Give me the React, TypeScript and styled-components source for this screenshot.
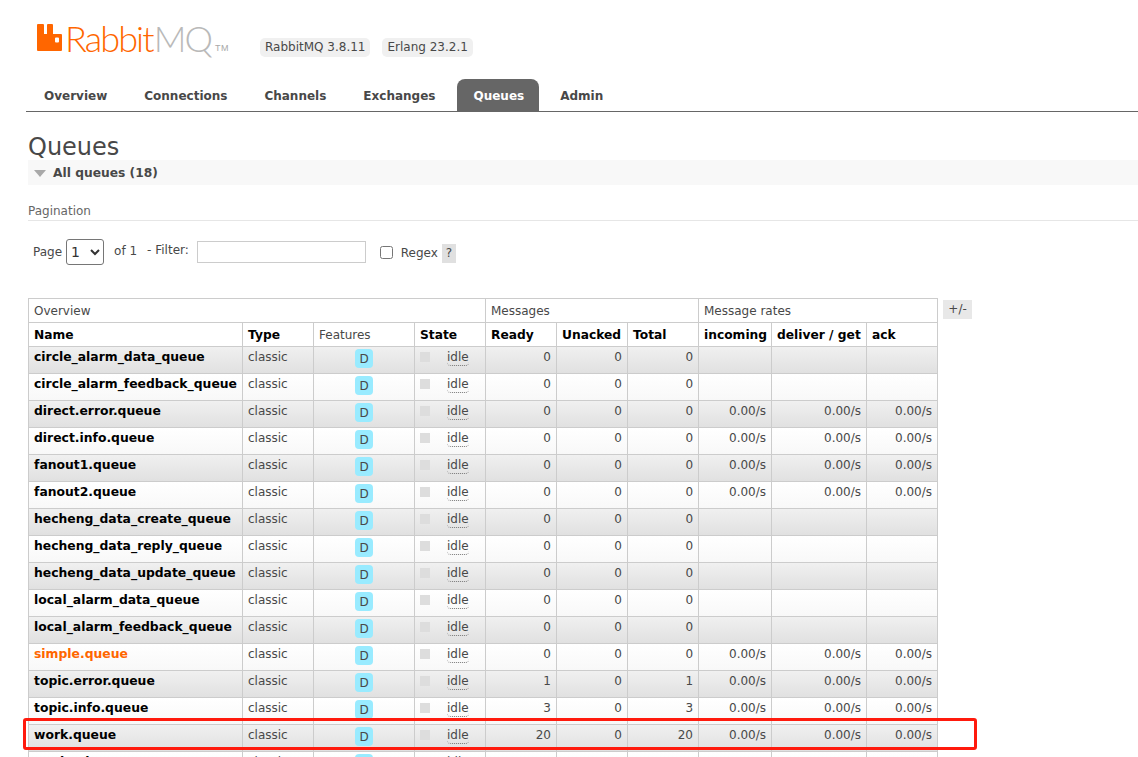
import React from 'react';
import styled, { createGlobalStyle } from 'styled-components';

const Global = createGlobalStyle`
  html, body { margin: 0; padding: 0; background: #fff; }
  body { font-family: "DejaVu Sans", Verdana, sans-serif; font-size: 12px; color: #484848; }
  #root { height: 757px; overflow: hidden; position: relative; }
`;

const Page = styled.div`
  position: relative;
  width: 1138px;
  height: 757px;
  overflow: hidden;
`;

const Header = styled.header`
  display: flex;
  align-items: flex-start;
  height: 79px;
  padding-left: 37px;
  box-sizing: border-box;
`;

const Logo = styled.div`
  display: flex;
  align-items: flex-start;
  width: 223px;
  height: 79px;
  padding-top: 16px;
  box-sizing: border-box;
`;

const LogoWord = styled.span<{ $grey?: boolean }>`
  font-family: "Lato", sans-serif;
  font-weight: 300;
  font-size: 36px;
  line-height: 44px;
  letter-spacing: -1.9px;
  margin-left: ${p => (p.$grey ? '1px' : '3px')};
  color: ${p => (p.$grey ? '#b9b9b9' : '#ff6600')};
`;

const LogoTm = styled.span`
  font-family: "Liberation Sans", sans-serif;
  font-size: 9px;
  letter-spacing: 0.5px;
  color: #a8a8a8;
  margin: 27px 0 0 4px;
`;

const Versions = styled.div`
  display: flex;
  gap: 12px;
  margin-top: 38px;
`;

const Version = styled.span`
  background: #f0f0f0;
  border-radius: 5px;
  padding: 0 5px;
  height: 19px;
  line-height: 19px;
  font-size: 12px;
  color: #484848;
`;

const Nav = styled.nav`
  display: flex;
  height: 32px;
  margin-left: 26px;
  border-bottom: 1px solid #666;
`;

const Tab = styled.a<{ $active?: boolean }>`
  display: block;
  height: 32px;
  line-height: 34px;
  margin: 0 ${p => (p.$active ? '3px' : '0')};
  padding: 0 ${p => (p.$active ? '15px' : '19px')} 0 ${p => (p.$active ? '16px' : '18px')};
  font-weight: 700;
  font-size: 12px;
  color: ${p => (p.$active ? '#fff' : '#484848')};
  background: ${p => (p.$active ? '#666' : 'transparent')};
  border-radius: ${p => (p.$active ? '8px 8px 0 0' : '0')};
`;

const Main = styled.main`
  padding-left: 28px;
`;

const Title = styled.h1`
  margin: 0;
  height: 48px;
  padding-top: 21px;
  box-sizing: border-box;
  font-size: 24px;
  line-height: 28px;
  font-weight: 400;
  color: #484848;
`;

const Section = styled.div`
  display: flex;
  align-items: center;
  height: 25px;
  background: #f8f8f8;
  font-weight: 700;
  font-size: 12.25px;
  color: #484848;
`;

const Arrow = styled.span`
  width: 0;
  height: 0;
  margin: 2px 7px 0 6px;
  border-left: 6px solid transparent;
  border-right: 6px solid transparent;
  border-top: 7px solid #a9a9a9;
`;

const SubHead = styled.div`
  height: 36px;
  padding-top: 18px;
  line-height: 16px;
  box-sizing: border-box;
  border-bottom: 1px solid #e6e6e6;
  font-size: 12px;
  color: #666;
`;

const Filter = styled.div`
  display: flex;
  align-items: center;
  height: 77px;
  padding: 0 0 15px 5px;
  box-sizing: border-box;
  color: #484848;
  font-size: 12px;
`;

const Label = styled.span<{ $gap?: number; $lift?: number }>`
  margin-left: ${p => p.$gap ?? 0}px;
  transform: translateY(${p => p.$lift ?? 0}px);
  white-space: pre;
`;

const PageSelect = styled.select`
  width: 38px;
  height: 26px;
  margin-left: 4px;
  font: 14px "DejaVu Sans", sans-serif;
  background: #fff;
  border: 1px solid #767676;
  border-radius: 3px;
  color: #333;
`;

const FilterInput = styled.input`
  width: 169px;
  height: 22px;
  margin-left: 8px;
  padding: 0;
  box-sizing: border-box;
  border: 1px solid #ccc;
`;

const RegexBox = styled.input`
  width: 13px;
  height: 13px;
  margin: 0 0 0 14px;
`;

const Help = styled.span`
  background: #e0e0e0;
  width: 14px;
  height: 19px;
  line-height: 19px;
  text-align: center;
  margin: 3px 0 0 4px;
`;

const TableWrap = styled.div`
  display: flex;
  align-items: flex-start;
`;

const Table = styled.table`
  border-collapse: collapse;
  table-layout: fixed;
  width: 910px;
  font-size: 12px;
  color: #484848;
`;

const HeadCell = styled.th<{ $strong?: boolean }>`
  height: 24px;
  padding: 0 5px;
  box-sizing: border-box;
  border: 1px solid #ccc;
  text-align: left;
  font-size: ${p => (p.$strong ? '12.25px' : '12px')};
  font-weight: ${p => (p.$strong ? 700 : 400)};
  color: ${p => (p.$strong ? '#000' : '#484848')};
  white-space: nowrap;
  overflow: hidden;
  background: #fff;
`;

const Row = styled.tr<{ $dark: boolean }>`
  height: 27px;
  background: ${p =>
    p.$dark
      ? 'linear-gradient(#f0f0f0, #e0e0e0)'
      : 'linear-gradient(#ffffff, #f8f8f8)'};
`;

const Cell = styled.td<{ $right?: boolean }>`
  height: 26px;
  padding: 0 5px 6px;
  box-sizing: border-box;
  border: 1px solid #ccc;
  text-align: ${p => (p.$right ? 'right' : 'left')};
  white-space: nowrap;
  overflow: hidden;
  vertical-align: middle;
`;

const NameCell = styled(Cell)<{ $orange?: boolean }>`
  font-weight: 700;
  font-size: 12.37px;
  padding-bottom: 7px;
  color: ${p => (p.$orange ? '#ff6600' : '#000')};
`;

const FeatureCell = styled.td`
  border: 1px solid #ccc;
  padding: 2px 0 0;
  text-align: center;
  vertical-align: top;
`;

const Durable = styled.span`
  display: inline-block;
  width: 18px;
  height: 19px;
  line-height: 20px;
  border-radius: 4px;
  background: #99ebff;
  color: #484848;
  text-align: center;
`;

const StateCell = styled.td`
  border: 1px solid #ccc;
  padding: 0 5px 5px;
  vertical-align: middle;
`;

const StateInner = styled.div`
  display: flex;
  align-items: center;
`;

const StateDot = styled.span`
  width: 10px;
  height: 10px;
  background: #ddd;
  margin-bottom: 1px;
`;

const Idle = styled.abbr`
  margin-left: 17px;
  text-decoration: none;
  border-bottom: 1px dotted #777;
  border-radius: 0 0 4px 4px;
  line-height: 14px;
  height: 15px;
`;

const PlusMinus = styled.span`
  margin-left: 5px;
  width: 29px;
  height: 19px;
  line-height: 19px;
  margin-top: 2px;
  background: #e8e8e8;
  text-align: center;
  color: #484848;
  font-size: 12px;
`;

const Highlight = styled.div`
  position: absolute;
  left: 23px;
  top: 718px;
  width: 948px;
  height: 26px;
  border: 3px solid #ff1a0d;
  border-radius: 3px;
  box-sizing: content-box;
  pointer-events: none;
`;

type Q = { name: string; ready: number; total: number; rates: boolean; orange?: boolean };

const queues: Q[] = [
  { name: 'circle_alarm_data_queue', ready: 0, total: 0, rates: false },
  { name: 'circle_alarm_feedback_queue', ready: 0, total: 0, rates: false },
  { name: 'direct.error.queue', ready: 0, total: 0, rates: true },
  { name: 'direct.info.queue', ready: 0, total: 0, rates: true },
  { name: 'fanout1.queue', ready: 0, total: 0, rates: true },
  { name: 'fanout2.queue', ready: 0, total: 0, rates: true },
  { name: 'hecheng_data_create_queue', ready: 0, total: 0, rates: false },
  { name: 'hecheng_data_reply_queue', ready: 0, total: 0, rates: false },
  { name: 'hecheng_data_update_queue', ready: 0, total: 0, rates: false },
  { name: 'local_alarm_data_queue', ready: 0, total: 0, rates: false },
  { name: 'local_alarm_feedback_queue', ready: 0, total: 0, rates: false },
  { name: 'simple.queue', ready: 0, total: 0, rates: true, orange: true },
  { name: 'topic.error.queue', ready: 1, total: 1, rates: true },
  { name: 'topic.info.queue', ready: 3, total: 3, rates: true },
  { name: 'work.queue', ready: 20, total: 20, rates: true },
  { name: 'worker.log.queue', ready: 0, total: 0, rates: true },
];

const widths = [214, 71, 101, 71, 71, 71, 71, 73, 95, 71];

const LogoMark = () => (
  <svg width="25" height="27" viewBox="0 0 25 27" style={{ flex: 'none', marginTop: 8 }} aria-hidden="true">
    <path
      fill="#ff6600"
      fillRule="evenodd"
      d="M0 1a1 1 0 0 1 1-1h5a1 1 0 0 1 1 1v9h3V1a1 1 0 0 1 1-1h4a1 1 0 0 1 1 1v9h8a1 1 0 0 1 1 1v15a1 1 0 0 1-1 1H1a1 1 0 0 1-1-1ZM18 14.5v3a1 1 0 0 0 1 1h2a1 1 0 0 0 1-1v-3a1 1 0 0 0-1-1h-2a1 1 0 0 0-1 1Z"
    />
  </svg>
);

export default function App() {
  return (
    <Page>
      <Global />
      <Header>
        <Logo>
          <LogoMark />
          <LogoWord>Rabbit</LogoWord>
          <LogoWord $grey>MQ</LogoWord>
          <LogoTm>TM</LogoTm>
        </Logo>
        <Versions>
          <Version>RabbitMQ 3.8.11</Version>
          <Version>Erlang 23.2.1</Version>
        </Versions>
      </Header>
      <Nav>
        <Tab>Overview</Tab>
        <Tab>Connections</Tab>
        <Tab>Channels</Tab>
        <Tab>Exchanges</Tab>
        <Tab $active>Queues</Tab>
        <Tab>Admin</Tab>
      </Nav>
      <Main>
        <Title>Queues</Title>
        <Section>
          <Arrow />
          All queues (18)
        </Section>
        <SubHead>Pagination</SubHead>
        <Filter>
          <Label>Page</Label>
          <PageSelect defaultValue="1">
            <option value="1">1</option>
          </PageSelect>
          <Label $gap={10} $lift={-1}>of 1</Label>
          <Label $gap={10} $lift={-2}>- Filter:</Label>
          <FilterInput />
          <RegexBox type="checkbox" />
          <Label $gap={8} $lift={1}>Regex</Label>
          <Help>?</Help>
        </Filter>
        <TableWrap>
          <Table>
            <colgroup>
              {widths.map((w, i) => (
                <col key={i} style={{ width: w }} />
              ))}
            </colgroup>
            <thead>
              <tr>
                <HeadCell colSpan={4}>Overview</HeadCell>
                <HeadCell colSpan={3}>Messages</HeadCell>
                <HeadCell colSpan={3}>Message rates</HeadCell>
              </tr>
              <tr>
                <HeadCell $strong>Name</HeadCell>
                <HeadCell $strong>Type</HeadCell>
                <HeadCell>Features</HeadCell>
                <HeadCell $strong>State</HeadCell>
                <HeadCell $strong>Ready</HeadCell>
                <HeadCell $strong>Unacked</HeadCell>
                <HeadCell $strong>Total</HeadCell>
                <HeadCell $strong>incoming</HeadCell>
                <HeadCell $strong>deliver / get</HeadCell>
                <HeadCell $strong>ack</HeadCell>
              </tr>
            </thead>
            <tbody>
              {queues.map((q, i) => (
                <Row key={q.name} $dark={i % 2 === 0}>
                  <NameCell $orange={q.orange}>{q.name}</NameCell>
                  <Cell>classic</Cell>
                  <FeatureCell>
                    <Durable>D</Durable>
                  </FeatureCell>
                  <StateCell>
                    <StateInner>
                      <StateDot />
                      <Idle>idle</Idle>
                    </StateInner>
                  </StateCell>
                  <Cell $right>{q.ready}</Cell>
                  <Cell $right>0</Cell>
                  <Cell $right>{q.total}</Cell>
                  <Cell $right>{q.rates ? '0.00/s' : ''}</Cell>
                  <Cell $right>{q.rates ? '0.00/s' : ''}</Cell>
                  <Cell $right>{q.rates ? '0.00/s' : ''}</Cell>
                </Row>
              ))}
            </tbody>
          </Table>
          <PlusMinus>+/-</PlusMinus>
        </TableWrap>
      </Main>
      <Highlight />
    </Page>
  );
}
